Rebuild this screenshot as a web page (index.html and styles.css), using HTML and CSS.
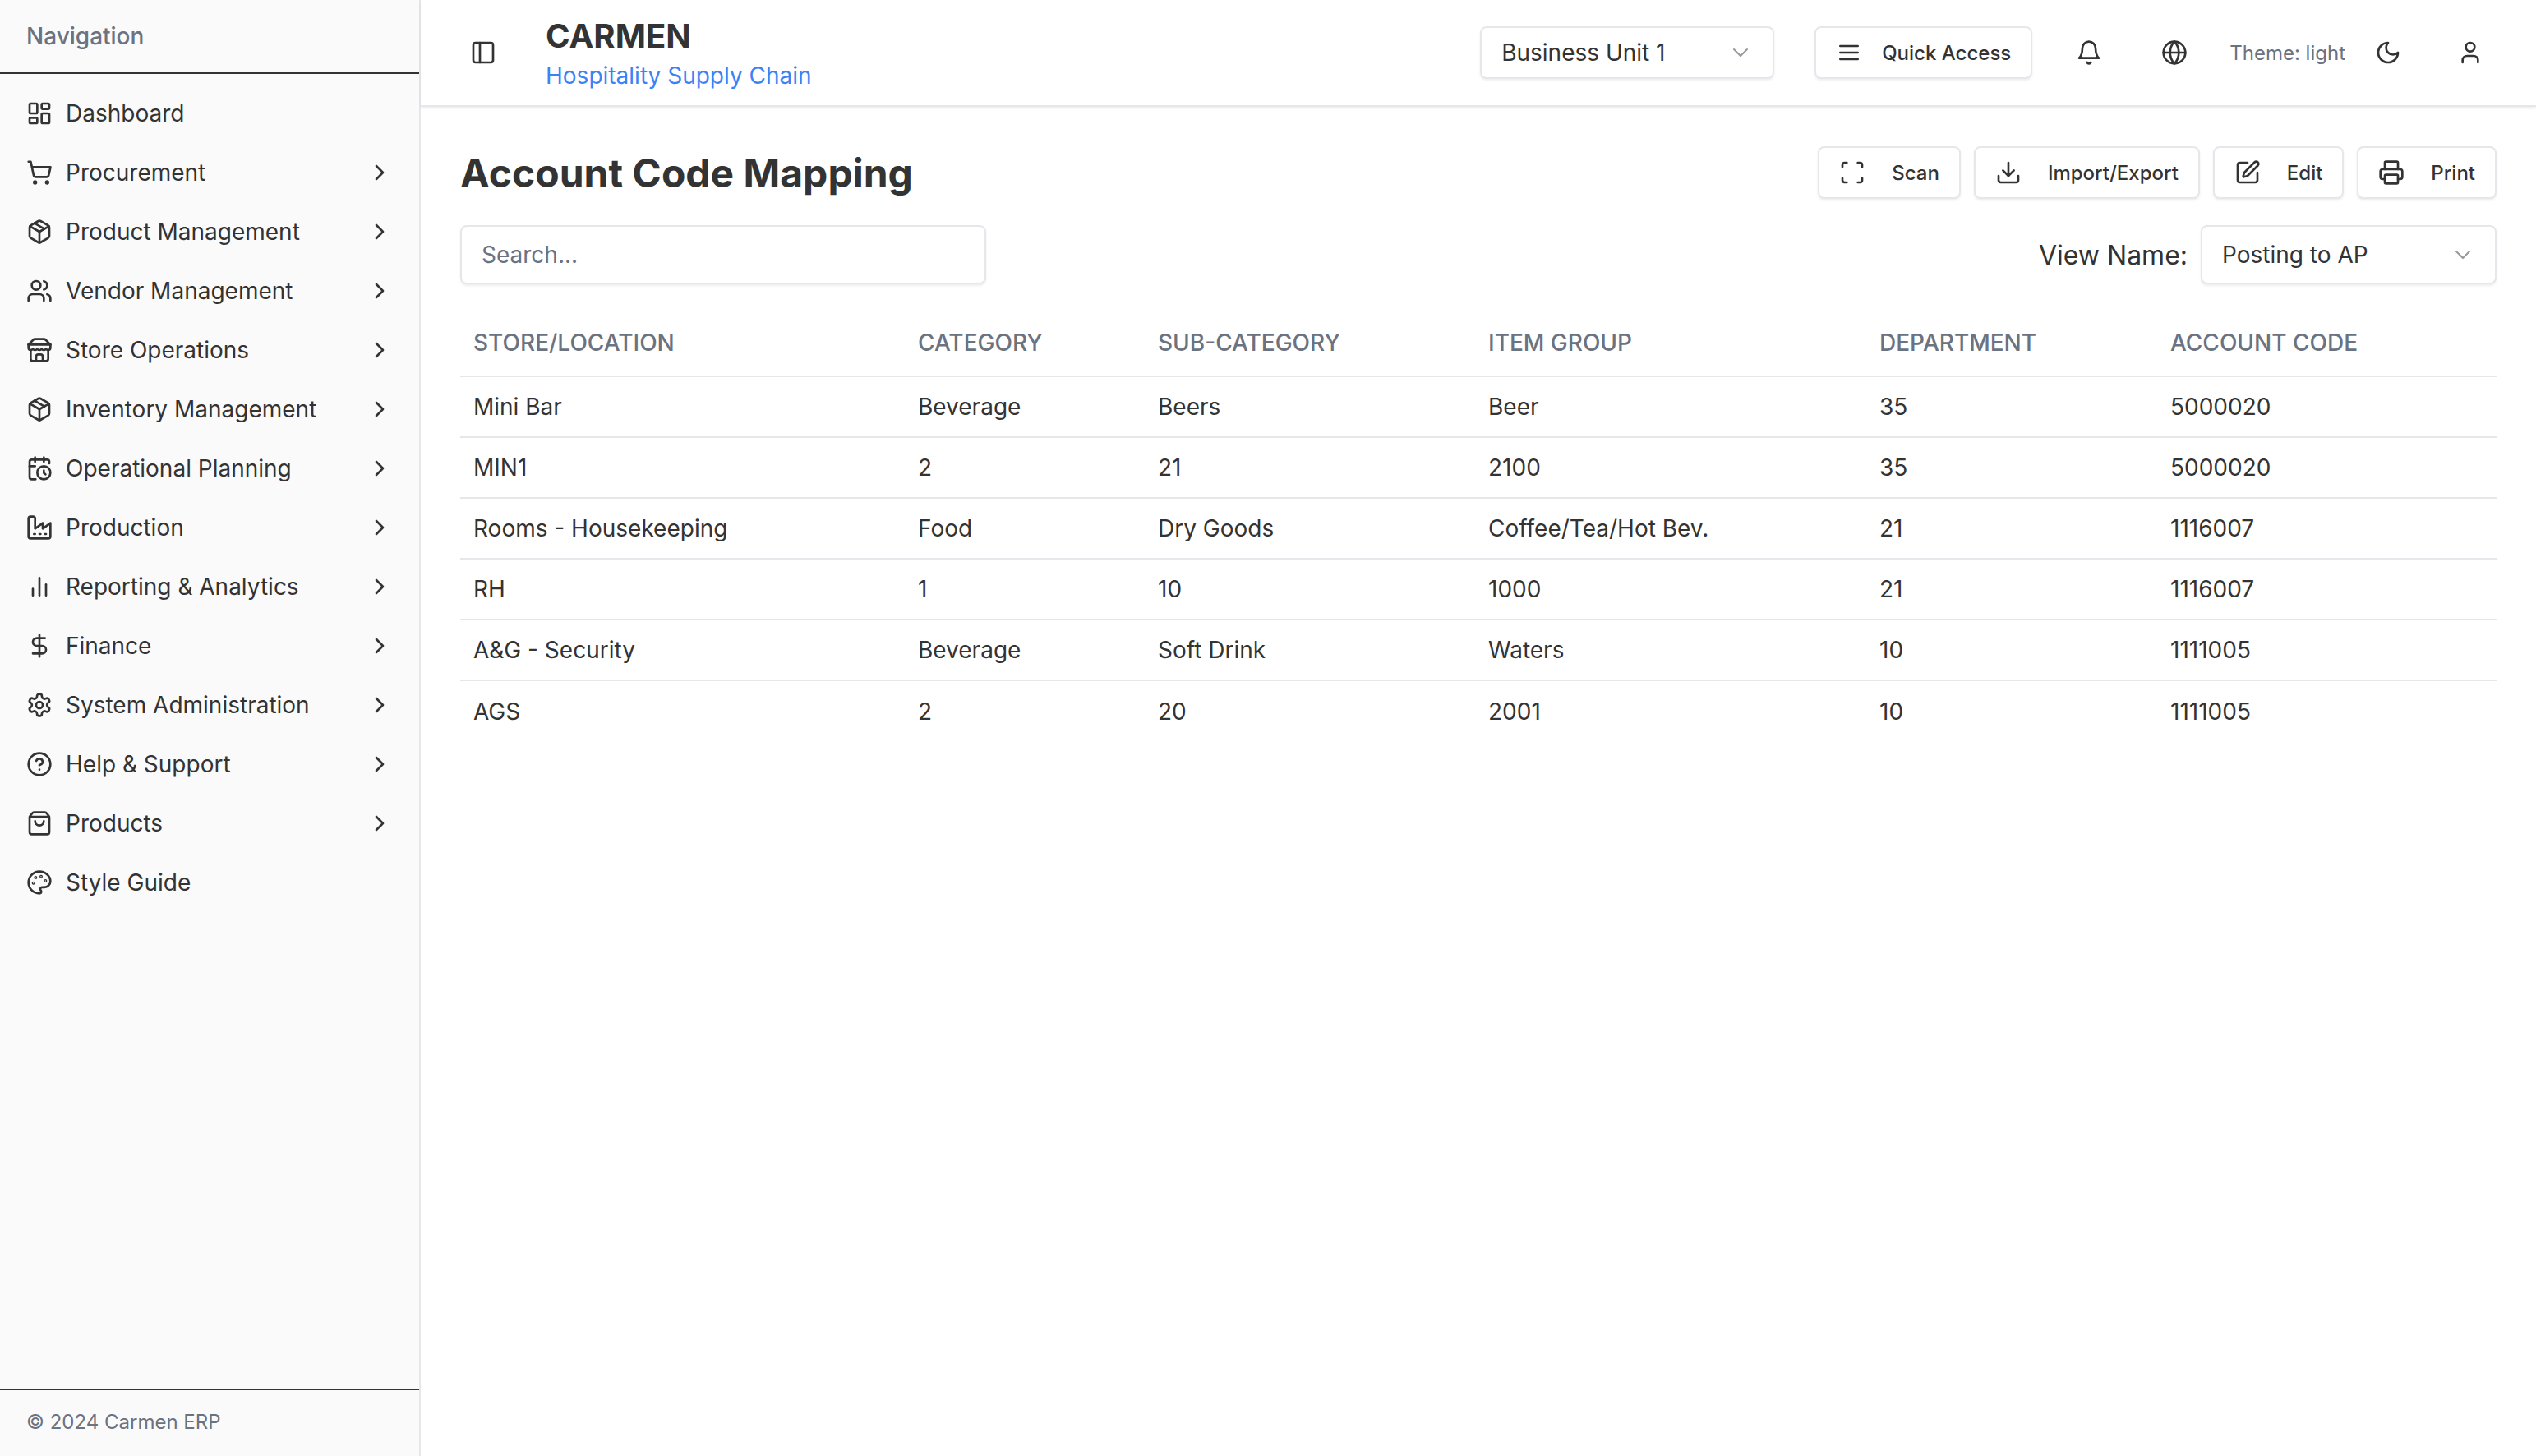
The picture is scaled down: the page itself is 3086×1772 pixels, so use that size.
FILE: index.html
```html
<!DOCTYPE html>
<html lang="en">
<head>
    <meta charset="UTF-8">
    <meta name="viewport" content="width=device-width, initial-scale=1.0">
    <title>Account Code Mapping</title>
    <link rel="stylesheet" href="styles.css">
</head>
<body>

<svg class="sprite" aria-hidden="true">
    <symbol id="i-dashboard" viewBox="0 0 24 24"><rect x="3" y="3" width="7" height="9" rx="1"/><rect x="14" y="3" width="7" height="5" rx="1"/><rect x="14" y="12" width="7" height="9" rx="1"/><rect x="3" y="16" width="7" height="5" rx="1"/></symbol>
    <symbol id="i-cart" viewBox="0 0 24 24"><circle cx="8" cy="21" r="1"/><circle cx="19" cy="21" r="1"/><path d="M2.05 2.05h2l2.66 12.42a2 2 0 0 0 2 1.58h9.78a2 2 0 0 0 1.95-1.57l1.65-7.43H5.12"/></symbol>
    <symbol id="i-package" viewBox="0 0 24 24"><path d="m7.5 4.27 9 5.15"/><path d="M21 8a2 2 0 0 0-1-1.73l-7-4a2 2 0 0 0-2 0l-7 4A2 2 0 0 0 3 8v8a2 2 0 0 0 1 1.73l7 4a2 2 0 0 0 2 0l7-4A2 2 0 0 0 21 16Z"/><path d="m3.3 7 8.7 5 8.7-5"/><path d="M12 22V12"/></symbol>
    <symbol id="i-users" viewBox="0 0 24 24"><path d="M16 21v-2a4 4 0 0 0-4-4H6a4 4 0 0 0-4 4v2"/><circle cx="9" cy="7" r="4"/><path d="M22 21v-2a4 4 0 0 0-3-3.87"/><path d="M16 3.13a4 4 0 0 1 0 7.75"/></symbol>
    <symbol id="i-store" viewBox="0 0 24 24"><path d="m2 7 4.41-4.41A2 2 0 0 1 7.83 2h8.34a2 2 0 0 1 1.42.59L22 7"/><path d="M4 12v8a2 2 0 0 0 2 2h12a2 2 0 0 0 2-2v-8"/><path d="M15 22v-4a2 2 0 0 0-2-2h-2a2 2 0 0 0-2 2v4"/><path d="M2 7h20"/><path d="M22 7v3a2 2 0 0 1-2 2a2.7 2.7 0 0 1-1.59-.63.7.7 0 0 0-.82 0A2.7 2.7 0 0 1 16 12a2.7 2.7 0 0 1-1.59-.63.7.7 0 0 0-.82 0A2.7 2.7 0 0 1 12 12a2.7 2.7 0 0 1-1.59-.63.7.7 0 0 0-.82 0A2.7 2.7 0 0 1 8 12a2.7 2.7 0 0 1-1.59-.63.7.7 0 0 0-.82 0A2.7 2.7 0 0 1 4 12a2 2 0 0 1-2-2V7"/></symbol>
    <symbol id="i-calendar" viewBox="0 0 24 24"><path d="M21 7.5V6a2 2 0 0 0-2-2H5a2 2 0 0 0-2 2v14a2 2 0 0 0 2 2h3.5"/><path d="M16 2v4"/><path d="M8 2v4"/><path d="M3 10h5"/><path d="M17.5 17.5 16 16.3V14"/><circle cx="16" cy="16" r="6"/></symbol>
    <symbol id="i-factory" viewBox="0 0 24 24"><path d="M2 20a2 2 0 0 0 2 2h16a2 2 0 0 0 2-2V8l-7 5V8l-7 5V4a2 2 0 0 0-2-2H4a2 2 0 0 0-2 2Z"/><path d="M17 18h1"/><path d="M12 18h1"/><path d="M7 18h1"/></symbol>
    <symbol id="i-chart" viewBox="0 0 24 24"><path d="M18 20V10"/><path d="M12 20V4"/><path d="M6 20v-6"/></symbol>
    <symbol id="i-dollar" viewBox="0 0 24 24"><path d="M12 2v20"/><path d="M17 5H9.5a3.5 3.5 0 0 0 0 7h5a3.5 3.5 0 0 1 0 7H6"/></symbol>
    <symbol id="i-settings" viewBox="0 0 24 24"><path d="M12.22 2h-.44a2 2 0 0 0-2 2v.18a2 2 0 0 1-1 1.73l-.43.25a2 2 0 0 1-2 0l-.15-.08a2 2 0 0 0-2.73.73l-.22.38a2 2 0 0 0 .73 2.73l.15.1a2 2 0 0 1 1 1.72v.51a2 2 0 0 1-1 1.74l-.15.09a2 2 0 0 0-.73 2.73l.22.38a2 2 0 0 0 2.73.73l.15-.08a2 2 0 0 1 2 0l.43.25a2 2 0 0 1 1 1.73V20a2 2 0 0 0 2 2h.44a2 2 0 0 0 2-2v-.18a2 2 0 0 1 1-1.73l.43-.25a2 2 0 0 1 2 0l.15.08a2 2 0 0 0 2.73-.73l.22-.39a2 2 0 0 0-.73-2.73l-.15-.08a2 2 0 0 1-1-1.74v-.5a2 2 0 0 1 1-1.74l.15-.09a2 2 0 0 0 .73-2.73l-.22-.38a2 2 0 0 0-2.73-.73l-.15.08a2 2 0 0 1-2 0l-.43-.25a2 2 0 0 1-1-1.73V4a2 2 0 0 0-2-2z"/><circle cx="12" cy="12" r="3"/></symbol>
    <symbol id="i-help" viewBox="0 0 24 24"><circle cx="12" cy="12" r="10"/><path d="M9.09 9a3 3 0 0 1 5.83 1c0 2-3 3-3 3"/><path d="M12 17h.01"/></symbol>
    <symbol id="i-bag" viewBox="0 0 24 24"><path d="M16 10a4 4 0 0 1-8 0"/><path d="M3.103 6.034h17.794"/><path d="M3.4 5.467a2 2 0 0 0-.4 1.2V20a2 2 0 0 0 2 2h14a2 2 0 0 0 2-2V6.667a2 2 0 0 0-.4-1.2l-2-2.667A2 2 0 0 0 17 2H7a2 2 0 0 0-1.6.8z"/></symbol>
    <symbol id="i-palette" viewBox="0 0 24 24"><circle cx="13.5" cy="6.5" r=".5"/><circle cx="17.5" cy="10.5" r=".5"/><circle cx="8.5" cy="7.5" r=".5"/><circle cx="6.5" cy="12.5" r=".5"/><path d="M12 2C6.5 2 2 6.5 2 12s4.5 10 10 10c.926 0 1.648-.746 1.648-1.688 0-.437-.18-.835-.437-1.125-.29-.289-.438-.652-.438-1.125a1.64 1.64 0 0 1 1.668-1.668h1.996c3.051 0 5.555-2.503 5.555-5.554C21.965 6.012 17.461 2 12 2z"/></symbol>
    <symbol id="i-chevron-right" viewBox="0 0 24 24"><path d="m9 18 6-6-6-6"/></symbol>
    <symbol id="i-chevron-down" viewBox="0 0 24 24"><path d="m6 9 6 6 6-6"/></symbol>
    <symbol id="i-panel" viewBox="0 0 24 24"><rect x="3" y="3" width="18" height="18" rx="2"/><path d="M9 3v18"/></symbol>
    <symbol id="i-menu" viewBox="0 0 24 24"><path d="M4 6h16"/><path d="M4 12h16"/><path d="M4 18h16"/></symbol>
    <symbol id="i-bell" viewBox="0 0 24 24"><path d="M6 8a6 6 0 0 1 12 0c0 7 3 9 3 9H3s3-2 3-9"/><path d="M10.3 21a1.94 1.94 0 0 0 3.4 0"/></symbol>
    <symbol id="i-globe" viewBox="0 0 24 24"><circle cx="12" cy="12" r="10"/><path d="M12 2a14.5 14.5 0 0 0 0 20 14.5 14.5 0 0 0 0-20"/><path d="M2 12h20"/></symbol>
    <symbol id="i-moon" viewBox="0 0 24 24"><path d="M12 3a6 6 0 0 0 9 9 9 9 0 1 1-9-9Z"/></symbol>
    <symbol id="i-user" viewBox="0 0 24 24"><path d="M19 21v-2a4 4 0 0 0-4-4H9a4 4 0 0 0-4 4v2"/><circle cx="12" cy="7" r="4"/></symbol>
    <symbol id="i-scan" viewBox="0 0 24 24"><path d="M3 7V5a2 2 0 0 1 2-2h2"/><path d="M17 3h2a2 2 0 0 1 2 2v2"/><path d="M21 17v2a2 2 0 0 1-2 2h-2"/><path d="M7 21H5a2 2 0 0 1-2-2v-2"/></symbol>
    <symbol id="i-download" viewBox="0 0 24 24"><path d="M21 15v4a2 2 0 0 1-2 2H5a2 2 0 0 1-2-2v-4"/><path d="m7 10 5 5 5-5"/><path d="M12 15V3"/></symbol>
    <symbol id="i-edit" viewBox="0 0 24 24"><path d="M12 3H5a2 2 0 0 0-2 2v14a2 2 0 0 0 2 2h14a2 2 0 0 0 2-2v-7"/><path d="M18.375 2.625a1 1 0 0 1 3 3l-9.013 9.014a2 2 0 0 1-.853.505l-2.873.84a.5.5 0 0 1-.62-.62l.84-2.873a2 2 0 0 1 .506-.852z"/></symbol>
    <symbol id="i-printer" viewBox="0 0 24 24"><path d="M6 18H4a2 2 0 0 1-2-2v-5a2 2 0 0 1 2-2h16a2 2 0 0 1 2 2v5a2 2 0 0 1-2 2h-2"/><path d="M6 9V3a1 1 0 0 1 1-1h10a1 1 0 0 1 1 1v6"/><rect x="6" y="14" width="12" height="8" rx="1"/></symbol>
</svg>

<div class="layout">
    <aside class="sidebar">
        <div class="sidebar-title">Navigation</div>
        <nav class="nav">
            <a class="nav-item"><svg class="icon"><use href="#i-dashboard"/></svg><span class="nav-label">Dashboard</span></a>
            <a class="nav-item"><svg class="icon"><use href="#i-cart"/></svg><span class="nav-label">Procurement</span><svg class="icon"><use href="#i-chevron-right"/></svg></a>
            <a class="nav-item"><svg class="icon"><use href="#i-package"/></svg><span class="nav-label">Product Management</span><svg class="icon"><use href="#i-chevron-right"/></svg></a>
            <a class="nav-item"><svg class="icon"><use href="#i-users"/></svg><span class="nav-label">Vendor Management</span><svg class="icon"><use href="#i-chevron-right"/></svg></a>
            <a class="nav-item"><svg class="icon"><use href="#i-store"/></svg><span class="nav-label">Store Operations</span><svg class="icon"><use href="#i-chevron-right"/></svg></a>
            <a class="nav-item"><svg class="icon"><use href="#i-package"/></svg><span class="nav-label">Inventory Management</span><svg class="icon"><use href="#i-chevron-right"/></svg></a>
            <a class="nav-item"><svg class="icon"><use href="#i-calendar"/></svg><span class="nav-label">Operational Planning</span><svg class="icon"><use href="#i-chevron-right"/></svg></a>
            <a class="nav-item"><svg class="icon"><use href="#i-factory"/></svg><span class="nav-label">Production</span><svg class="icon"><use href="#i-chevron-right"/></svg></a>
            <a class="nav-item"><svg class="icon"><use href="#i-chart"/></svg><span class="nav-label">Reporting &amp; Analytics</span><svg class="icon"><use href="#i-chevron-right"/></svg></a>
            <a class="nav-item"><svg class="icon"><use href="#i-dollar"/></svg><span class="nav-label">Finance</span><svg class="icon"><use href="#i-chevron-right"/></svg></a>
            <a class="nav-item"><svg class="icon"><use href="#i-settings"/></svg><span class="nav-label">System Administration</span><svg class="icon"><use href="#i-chevron-right"/></svg></a>
            <a class="nav-item"><svg class="icon"><use href="#i-help"/></svg><span class="nav-label">Help &amp; Support</span><svg class="icon"><use href="#i-chevron-right"/></svg></a>
            <a class="nav-item"><svg class="icon"><use href="#i-bag"/></svg><span class="nav-label">Products</span><svg class="icon"><use href="#i-chevron-right"/></svg></a>
            <a class="nav-item"><svg class="icon"><use href="#i-palette"/></svg><span class="nav-label">Style Guide</span></a>
        </nav>
        <div class="sidebar-footer">© 2024 Carmen ERP</div>
    </aside>

    <div class="main">
        <header class="topbar">
            <svg class="icon toggle"><use href="#i-panel"/></svg>
            <div class="brand">
                <div class="brand-name">CARMEN</div>
                <div class="brand-sub">Hospitality Supply Chain</div>
            </div>
            <div class="select unit-select">
                <span>Business Unit 1</span>
                <svg class="icon select-arrow"><use href="#i-chevron-down"/></svg>
            </div>
            <button class="btn quick-btn"><svg class="icon"><use href="#i-menu"/></svg>Quick Access</button>
            <div class="icon-box bell"><svg class="icon"><use href="#i-bell"/></svg></div>
            <div class="icon-box globe"><svg class="icon"><use href="#i-globe"/></svg></div>
            <span class="theme-label">Theme: light</span>
            <div class="icon-box moon"><svg class="icon"><use href="#i-moon"/></svg></div>
            <div class="icon-box person"><svg class="icon"><use href="#i-user"/></svg></div>
        </header>

        <main class="content">
            <div class="page-head">
                <h1>Account Code Mapping</h1>
                <div class="actions">
                    <button class="btn"><svg class="icon"><use href="#i-scan"/></svg>Scan</button>
                    <button class="btn"><svg class="icon"><use href="#i-download"/></svg>Import/Export</button>
                    <button class="btn"><svg class="icon"><use href="#i-edit"/></svg>Edit</button>
                    <button class="btn"><svg class="icon"><use href="#i-printer"/></svg>Print</button>
                </div>
            </div>

            <div class="filters">
                <input class="search" type="text" placeholder="Search...">
                <div class="view-name">
                    <span class="view-label">View Name:</span>
                    <div class="select view-select">
                        <span>Posting to AP</span>
                        <svg class="icon select-arrow"><use href="#i-chevron-down"/></svg>
                    </div>
                </div>
            </div>

            <table class="mapping">
                <colgroup>
                    <col class="col-store"><col class="col-cat"><col class="col-sub"><col class="col-group"><col class="col-dept"><col class="col-code">
                </colgroup>
                <thead>
                    <tr><th>Store/Location</th><th>Category</th><th>Sub-Category</th><th>Item Group</th><th>Department</th><th>Account Code</th></tr>
                </thead>
                <tbody>
                    <tr><td>Mini Bar</td><td>Beverage</td><td>Beers</td><td>Beer</td><td>35</td><td>5000020</td></tr>
                    <tr><td>MIN1</td><td>2</td><td>21</td><td>2100</td><td>35</td><td>5000020</td></tr>
                    <tr><td>Rooms - Housekeeping</td><td>Food</td><td>Dry Goods</td><td>Coffee/Tea/Hot Bev.</td><td>21</td><td>1116007</td></tr>
                    <tr><td>RH</td><td>1</td><td>10</td><td>1000</td><td>21</td><td>1116007</td></tr>
                    <tr><td>A&amp;G - Security</td><td>Beverage</td><td>Soft Drink</td><td>Waters</td><td>10</td><td>1111005</td></tr>
                    <tr><td>AGS</td><td>2</td><td>20</td><td>2001</td><td>10</td><td>1111005</td></tr>
                </tbody>
            </table>
        </main>
    </div>
</div>

</body>
</html>
```

FILE: styles.css
```css
* {
    box-sizing: border-box;
}

html, body {
    margin: 0;
    height: 100%;
}

body {
    font-family: Inter, "Noto Sans", sans-serif;
    font-size: 28px;
    color: #333;
    background-color: #fff;
    overflow: hidden;
}

.sprite {
    display: none;
}

.icon {
    width: 32px;
    height: 32px;
    flex: none;
    fill: none;
    stroke: currentColor;
    stroke-width: 2;
    stroke-linecap: round;
    stroke-linejoin: round;
}

.layout {
    display: flex;
    height: 100vh;
}

.sidebar {
    display: flex;
    flex-direction: column;
    width: 512px;
    flex: none;
    background-color: #fafafa;
    border-right: 2px solid #e5e7eb;
}

.sidebar-title {
    height: 90px;
    padding: 0 32px;
    line-height: 88px;
    font-weight: 500;
    color: #6b7280;
    border-bottom: 2px solid #333;
}

.nav {
    flex: 1;
    padding-top: 12px;
}

.nav-item {
    display: flex;
    align-items: center;
    gap: 16px;
    height: 72px;
    padding: 0 32px;
}

.nav-label {
    flex: 1;
}

.sidebar-footer {
    height: 82px;
    padding: 0 32px;
    line-height: 78px;
    font-size: 24px;
    color: #6b7280;
    border-top: 2px solid #333;
}

.main {
    flex: 1;
    min-width: 0;
}

.topbar {
    display: flex;
    align-items: center;
    height: 130px;
    padding: 0 48px 0 60px;
    background-color: #fff;
    border-bottom: 2px solid #e5e7eb;
    box-shadow: 0 2px 3px rgba(0, 0, 0, 0.07);
}

.toggle {
    margin-right: 60px;
}

.brand {
    flex: 1;
    padding-top: 4px;
}

.brand-name {
    font-size: 40px;
    font-weight: 700;
    line-height: 48px;
}

.brand-sub {
    margin-top: 4px;
    line-height: 40px;
    color: #3b82f6;
}

.select {
    display: flex;
    align-items: center;
    justify-content: space-between;
    height: 64px;
    background-color: #fff;
    border: 2px solid #e5e7eb;
    border-radius: 8px;
    box-shadow: 0 2px 3px rgba(0, 0, 0, 0.07);
}

.select-arrow {
    color: #333;
    opacity: 0.5;
    stroke-width: 1.5;
}

.unit-select {
    width: 358px;
    padding: 0 23px 0 24px;
    margin-right: 49px;
}

.btn {
    display: flex;
    align-items: center;
    gap: 32px;
    height: 64px;
    padding: 0 24px;
    font-family: inherit;
    font-size: 24px;
    font-weight: 500;
    color: #333;
    background-color: #fff;
    border: 2px solid #e5e7eb;
    border-radius: 8px;
    box-shadow: 0 2px 3px rgba(0, 0, 0, 0.07);
}

.quick-btn {
    gap: 24px;
    margin-right: 37px;
}

.icon-box {
    display: flex;
    align-items: center;
    justify-content: center;
    width: 64px;
    height: 64px;
}

.bell {
    margin-right: 40px;
}

.globe {
    margin-right: 35px;
}

.theme-label {
    font-size: 24px;
    color: #6b7280;
    margin-right: 20px;
}

.moon {
    margin-right: 36px;
}

.content {
    padding: 48px;
}

.page-head {
    display: flex;
    align-items: center;
    justify-content: space-between;
    height: 64px;
}

h1 {
    margin: 0;
    font-size: 48px;
    font-weight: 700;
}

.actions {
    display: flex;
    gap: 16px;
}

.filters {
    display: flex;
    align-items: center;
    justify-content: space-between;
    margin-top: 32px;
}

.search {
    width: 640px;
    height: 72px;
    padding: 0 24px;
    font-family: inherit;
    font-size: 28px;
    color: #333;
    background-color: #fff;
    border: 2px solid #e5e7eb;
    border-radius: 8px;
    box-shadow: 0 2px 3px rgba(0, 0, 0, 0.07);
}

.search::placeholder {
    color: #6b7280;
}

.view-name {
    display: flex;
    align-items: center;
    gap: 16px;
}

.view-label {
    font-size: 32px;
}

.view-select {
    width: 360px;
    height: 72px;
    padding: 0 23px 0 24px;
}

.mapping {
    width: 100%;
    margin-top: 31px;
    table-layout: fixed;
    border-collapse: separate;
    border-spacing: 0;
}

.col-store { width: 541px; }
.col-cat { width: 292px; }
.col-sub { width: 402px; }
.col-group { width: 476px; }
.col-dept { width: 354px; }
.col-code { width: 413px; }

.mapping th {
    height: 82px;
    padding: 0 16px;
    text-align: left;
    font-weight: 500;
    text-transform: uppercase;
    color: #6b7280;
    border-bottom: 2px solid #e5e7eb;
}

.mapping td {
    height: 74px;
    padding: 0 16px;
    border-bottom: 2px solid #e5e7eb;
}

.mapping tbody tr:last-child td {
    border-bottom: none;
}
```
